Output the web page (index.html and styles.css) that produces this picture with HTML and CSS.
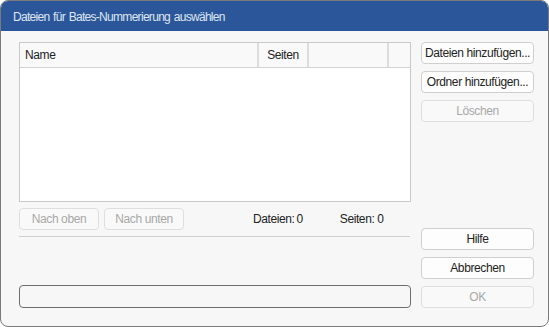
FILE: index.html
```
<!DOCTYPE html>
<html lang="de">
<head>
  <meta charset="UTF-8">
  <title>Dateien für Bates-Nummerierung auswählen</title>
  <link rel="stylesheet" href="styles.css">
</head>
<body>
  <div class="dialog">
    <div class="titlebar">Dateien für Bates-Nummerierung auswählen</div>

    <div class="content">
      <div class="left">
        <div class="filelist">
          <div class="list-head">
            <div class="col col-name">Name</div>
            <div class="col col-pages">Seiten</div>
            <div class="col col-blank"></div>
            <div class="col col-rest"></div>
          </div>
        </div>

        <div class="list-tools">
          <button class="btn btn-move" disabled>Nach oben</button>
          <button class="btn btn-move" disabled>Nach unten</button>
          <span class="count count-files">Dateien:&thinsp;0</span>
          <span class="count count-pages">Seiten: 0</span>
        </div>

        <div class="separator"></div>

        <div class="progress"></div>
      </div>

      <div class="right">
        <div class="btn-group">
          <button class="btn">Dateien hinzufügen...</button>
          <button class="btn">Ordner hinzufügen...</button>
          <button class="btn" disabled>Löschen</button>
        </div>
        <div class="btn-group bottom">
          <button class="btn">Hilfe</button>
          <button class="btn">Abbrechen</button>
          <button class="btn" disabled>OK</button>
        </div>
      </div>
    </div>
  </div>
</body>
</html>
```

FILE: styles.css
```
    body {
      margin: 0;
      background: #ffffff;
      font-family: "Liberation Sans", Arial, sans-serif;
      font-size: 12px;
      letter-spacing: -0.4px;
      color: #222222;
    }

    .dialog {
      width: 549px;
      height: 327px;
      box-sizing: border-box;
      border: 1px solid #7a7a7a;
      border-radius: 8px;
      background: #f7f7f7;
      overflow: hidden;
      display: flex;
      flex-direction: column;
    }

    .titlebar {
      height: 30px;
      flex: none;
      background: #2b579a;
      color: #dfe6f1;
      font-size: 12px;
      letter-spacing: -0.7px;
      word-spacing: 1px;
      line-height: 33px;
      padding-left: 12px;
      white-space: nowrap;
    }

    .content {
      flex: 1;
      display: flex;
      padding: 11px 14px 18px 18px;
      gap: 10px;
    }

    .left {
      width: 393px;
      display: flex;
      flex-direction: column;
    }

    .filelist {
      height: 160px;
      box-sizing: border-box;
      border: 1px solid #c9c9c9;
      background: #ffffff;
    }

    .list-head {
      display: flex;
      height: 24px;
      border-bottom: 1px solid #d4d4d4;
      background: #f9f9f9;
    }

    .col {
      box-sizing: border-box;
      border-right: 2px solid #dcdcdc;
      line-height: 25px;
      white-space: nowrap;
    }

    .col-name {
      width: 239px;
      padding-left: 5px;
    }

    .col-pages {
      width: 50px;
      text-align: center;
    }

    .col-blank {
      width: 80px;
    }

    .col-rest {
      flex: 1;
      border-right: none;
    }

    .list-tools {
      display: flex;
      align-items: center;
      margin-top: 6px;
      height: 22px;
      white-space: nowrap;
    }

    .btn {
      height: 22px;
      box-sizing: border-box;
      border: 1px solid #cfcfcf;
      border-radius: 4px;
      background: #fdfdfd;
      font-family: inherit;
      font-size: 12px;
      letter-spacing: -0.4px;
      color: #222222;
      padding: 0;
      white-space: nowrap;
    }

    .btn:disabled {
      border-color: #dedede;
      color: #a8a8a8;
      background: #f9f9f9;
    }

    .btn-move {
      width: 80px;
      margin-right: 5px;
    }

    .count {
      color: #222222;
    }

    .count-files {
      margin-left: 64px;
    }

    .count-pages {
      margin-left: 37px;
    }

    .separator {
      height: 1px;
      background: #cfcfcf;
      margin-top: 6px;
      width: 391px;
    }

    .progress {
      margin-top: auto;
      height: 23px;
      box-sizing: border-box;
      border: 1px solid #6e6e6e;
      border-radius: 4px;
      background: #f7f7f7;
    }

    .right {
      width: 113px;
      display: flex;
      flex-direction: column;
      justify-content: space-between;
    }

    .btn-group {
      display: flex;
      flex-direction: column;
      gap: 7px;
    }

    .btn-group .btn {
      width: 113px;
    }
```
